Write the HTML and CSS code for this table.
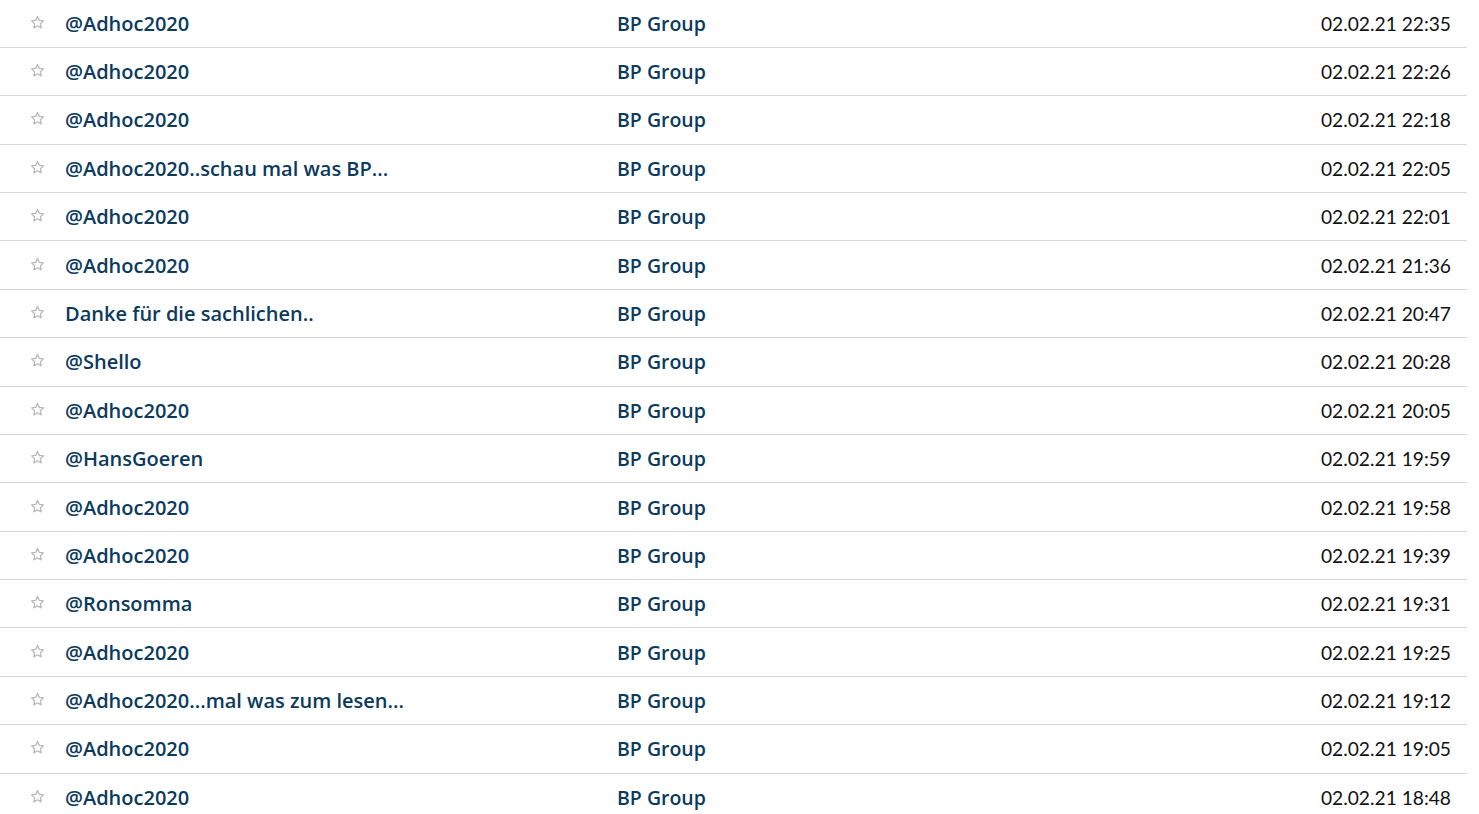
FILE: index.html
```html
<!DOCTYPE html>
<html lang="de">
<head>
    <meta charset="UTF-8">
    <title>Forum BP Group</title>
    <link rel="stylesheet" href="styles.css">
</head>
<body>
    <ul class="thread-list" id="threadList">
        <!-- Die Zeilen werden per Script eingefügt -->
    </ul>
    <script>
// Liste der Beiträge
const threads = [
    ['@Adhoc2020', '02.02.21 22:35'],
    ['@Adhoc2020', '02.02.21 22:26'],
    ['@Adhoc2020', '02.02.21 22:18'],
    ['@Adhoc2020..schau mal was BP...', '02.02.21 22:05'],
    ['@Adhoc2020', '02.02.21 22:01'],
    ['@Adhoc2020', '02.02.21 21:36'],
    ['Danke für die sachlichen..', '02.02.21 20:47'],
    ['@Shello', '02.02.21 20:28'],
    ['@Adhoc2020', '02.02.21 20:05'],
    ['@HansGoeren', '02.02.21 19:59'],
    ['@Adhoc2020', '02.02.21 19:58'],
    ['@Adhoc2020', '02.02.21 19:39'],
    ['@Ronsomma', '02.02.21 19:31'],
    ['@Adhoc2020', '02.02.21 19:25'],
    ['@Adhoc2020...mal was zum lesen...', '02.02.21 19:12'],
    ['@Adhoc2020', '02.02.21 19:05'],
    ['@Adhoc2020', '02.02.21 18:48']
];

const list = document.getElementById('threadList');
threads.forEach(([title, date]) => {
    const row = document.createElement('li');
    row.className = 'thread-row';
    row.innerHTML = `
        <span class="star"><svg width="15" height="15" viewBox="0 0 24 24"><path d="M12 2.5l2.9 6.1 6.6.8-4.9 4.6 1.3 6.6L12 17.3l-5.9 3.3 1.3-6.6-4.9-4.6 6.6-.8z" fill="none" stroke="#b8b8b8" stroke-width="2" stroke-linejoin="round"/></svg></span>
        <a class="title" href="#">${title}</a>
        <a class="group" href="#">BP Group</a>
        <span class="date">${date}</span>
    `;
    list.appendChild(row);
});
    </script>
</body>
</html>
```

FILE: styles.css
```css
body {
    margin: 0;
    background: #fff;
    font-family: "Open Sans", "Noto Sans", sans-serif;
}

.thread-list {
    list-style: none;
    margin: -0.6px 0 0;
    padding: 0;
    width: 1467px;
}

.thread-row {
    display: grid;
    grid-template-columns: 65px 552px 1fr auto;
    align-items: center;
    height: 48.4px;
    box-sizing: border-box;
    padding-right: 16px;
    border-bottom: 1px solid #d3d6d9;
}

.star {
    display: flex;
    justify-content: center;
    margin-left: 9px;
    padding-bottom: 2px;
}

.title,
.group {
    color: #0b3a5d;
    font-weight: 600;
    text-decoration: none;
}

.title {
    font-size: 20px;
}

.group {
    justify-self: start;
    font-size: 19.5px;
}

.date {
    color: #111;
    font-family: "Lato", sans-serif;
    font-size: 19.2px;
}
```
